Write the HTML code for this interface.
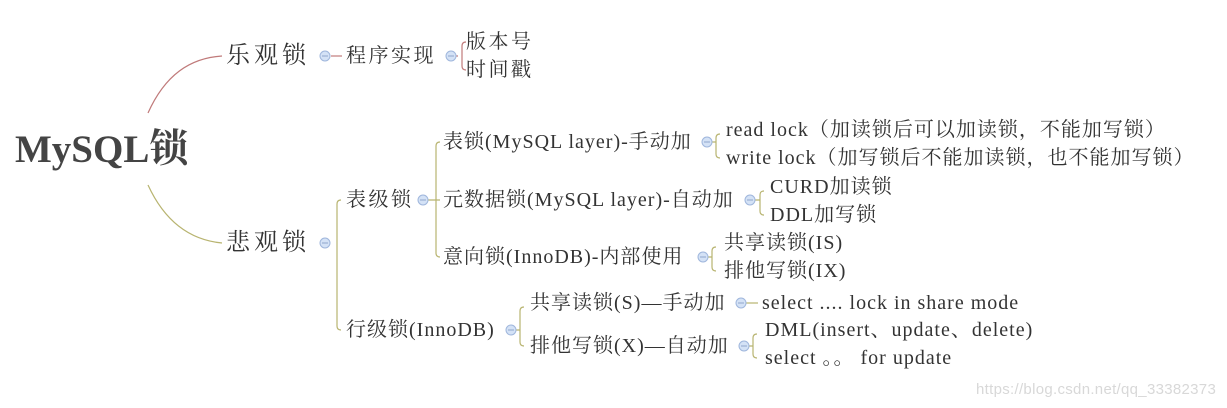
<!DOCTYPE html>
<html><head><meta charset="utf-8"><style>
body{margin:0;width:1227px;height:408px;background:#fff;position:relative;overflow:hidden;font-family:"Liberation Serif","Noto Serif CJK SC",serif;color:#333}
.t{position:absolute;white-space:nowrap;font-size:20px;letter-spacing:1px;line-height:24px;transform:translateY(-50%)}
.b{font-size:24px;letter-spacing:4px}
.c{letter-spacing:2.5px}
svg{position:absolute;left:0;top:0}
</style></head><body>
<svg width="1227" height="408">
<g fill="none" stroke-width="1.2">
<path d="M148 113 C165 75 190 58 222 56" stroke="#c07a7a"/>
<path d="M148 185 C165 222 190 240 222 243" stroke="#b8b470"/>
<g stroke="#c07a7a">
<path d="M331 56 H342"/>
<path d="M456 56 H458 M466 42 Q462 42 462 46 V66 Q462 70 466 70"/>
</g>
<g stroke="#b8b470">
<path d="M337 204 Q337 200 341 200 M337 204 V326 Q337 330 341 330"/>
<path d="M428 200 H440 M436 146 Q436 142 440 142 M436 146 V253 Q436 257 440 257"/>
<path d="M712 142 H716 M720 134 Q716 134 716 138 V154 Q716 158 720 158"/>
<path d="M755 200 H760 M764 191 Q760 191 760 195 V211 Q760 215 764 215"/>
<path d="M708 257 H712 M716 247 Q712 247 712 251 V267 Q712 271 716 271"/>
<path d="M516 330 H520 M524 307 Q520 307 520 311 V342 Q520 346 524 346"/>
<path d="M746 303 H758"/>
<path d="M749 346 H753 M757 334 Q753 334 753 338 V354 Q753 358 757 358"/>
</g>
</g>
<g fill="#d4e2f6" stroke="#9fb6dc" stroke-width="1">
<circle cx="325" cy="56" r="5"/><circle cx="451" cy="56" r="5"/>
<circle cx="325" cy="243" r="5"/><circle cx="423" cy="200" r="5"/>
<circle cx="707" cy="142" r="5"/><circle cx="750" cy="200" r="5"/>
<circle cx="703" cy="257" r="5"/><circle cx="511" cy="330" r="5"/>
<circle cx="741" cy="303" r="5"/><circle cx="744" cy="346" r="5"/>
</g>
<g stroke="#8fa6cc" stroke-width="1">
<path d="M322 56h6M448 56h6M322 243h6M420 200h6M704 142h6M747 200h6M700 257h6M508 330h6M738 303h6M741 346h6"/>
</g>
</svg>
<div class="t" style="left:15px;top:150px;font-size:39px;letter-spacing:0;font-weight:bold;color:#444">MySQL锁</div>
<div class="t b" style="left:226px;top:56px">乐观锁</div>
<div class="t b" style="left:226px;top:243px">悲观锁</div>
<div class="t c" style="left:346px;top:56px">程序实现</div>
<div class="t c" style="left:466px;top:42px">版本号</div>
<div class="t c" style="left:466px;top:70px">时间戳</div>
<div class="t c" style="left:346px;top:200px">表级锁</div>
<div class="t" style="left:443px;top:142px">表锁(MySQL layer)-手动加</div>
<div class="t" style="left:443px;top:200px">元数据锁(MySQL layer)-自动加</div>
<div class="t" style="left:443px;top:257px">意向锁(InnoDB)-内部使用</div>
<div class="t" style="left:726px;top:130px">read lock（加读锁后可以加读锁，不能加写锁）</div>
<div class="t" style="left:726px;top:158px">write lock（加写锁后不能加读锁，也不能加写锁）</div>
<div class="t" style="left:770px;top:187px">CURD加读锁</div>
<div class="t" style="left:770px;top:215px">DDL加写锁</div>
<div class="t" style="left:724px;top:243px">共享读锁(IS)</div>
<div class="t" style="left:724px;top:271px">排他写锁(IX)</div>
<div class="t" style="left:346px;top:330px">行级锁(InnoDB)</div>
<div class="t" style="left:530px;top:303px">共享读锁(S)—手动加</div>
<div class="t" style="left:530px;top:346px">排他写锁(X)—自动加</div>
<div class="t" style="left:762px;top:303px">select .... lock in share mode</div>
<div class="t" style="left:765px;top:330px">DML(insert、update、delete)</div>
<div class="t" style="left:765px;top:358px">select 。。 for update</div>
<div class="t" style="left:976px;top:390px;font-family:'Liberation Sans',sans-serif;font-size:15px;letter-spacing:0.3px;color:#d8d8d8">https://blog.csdn.net/qq_33382373</div>
</body></html>
